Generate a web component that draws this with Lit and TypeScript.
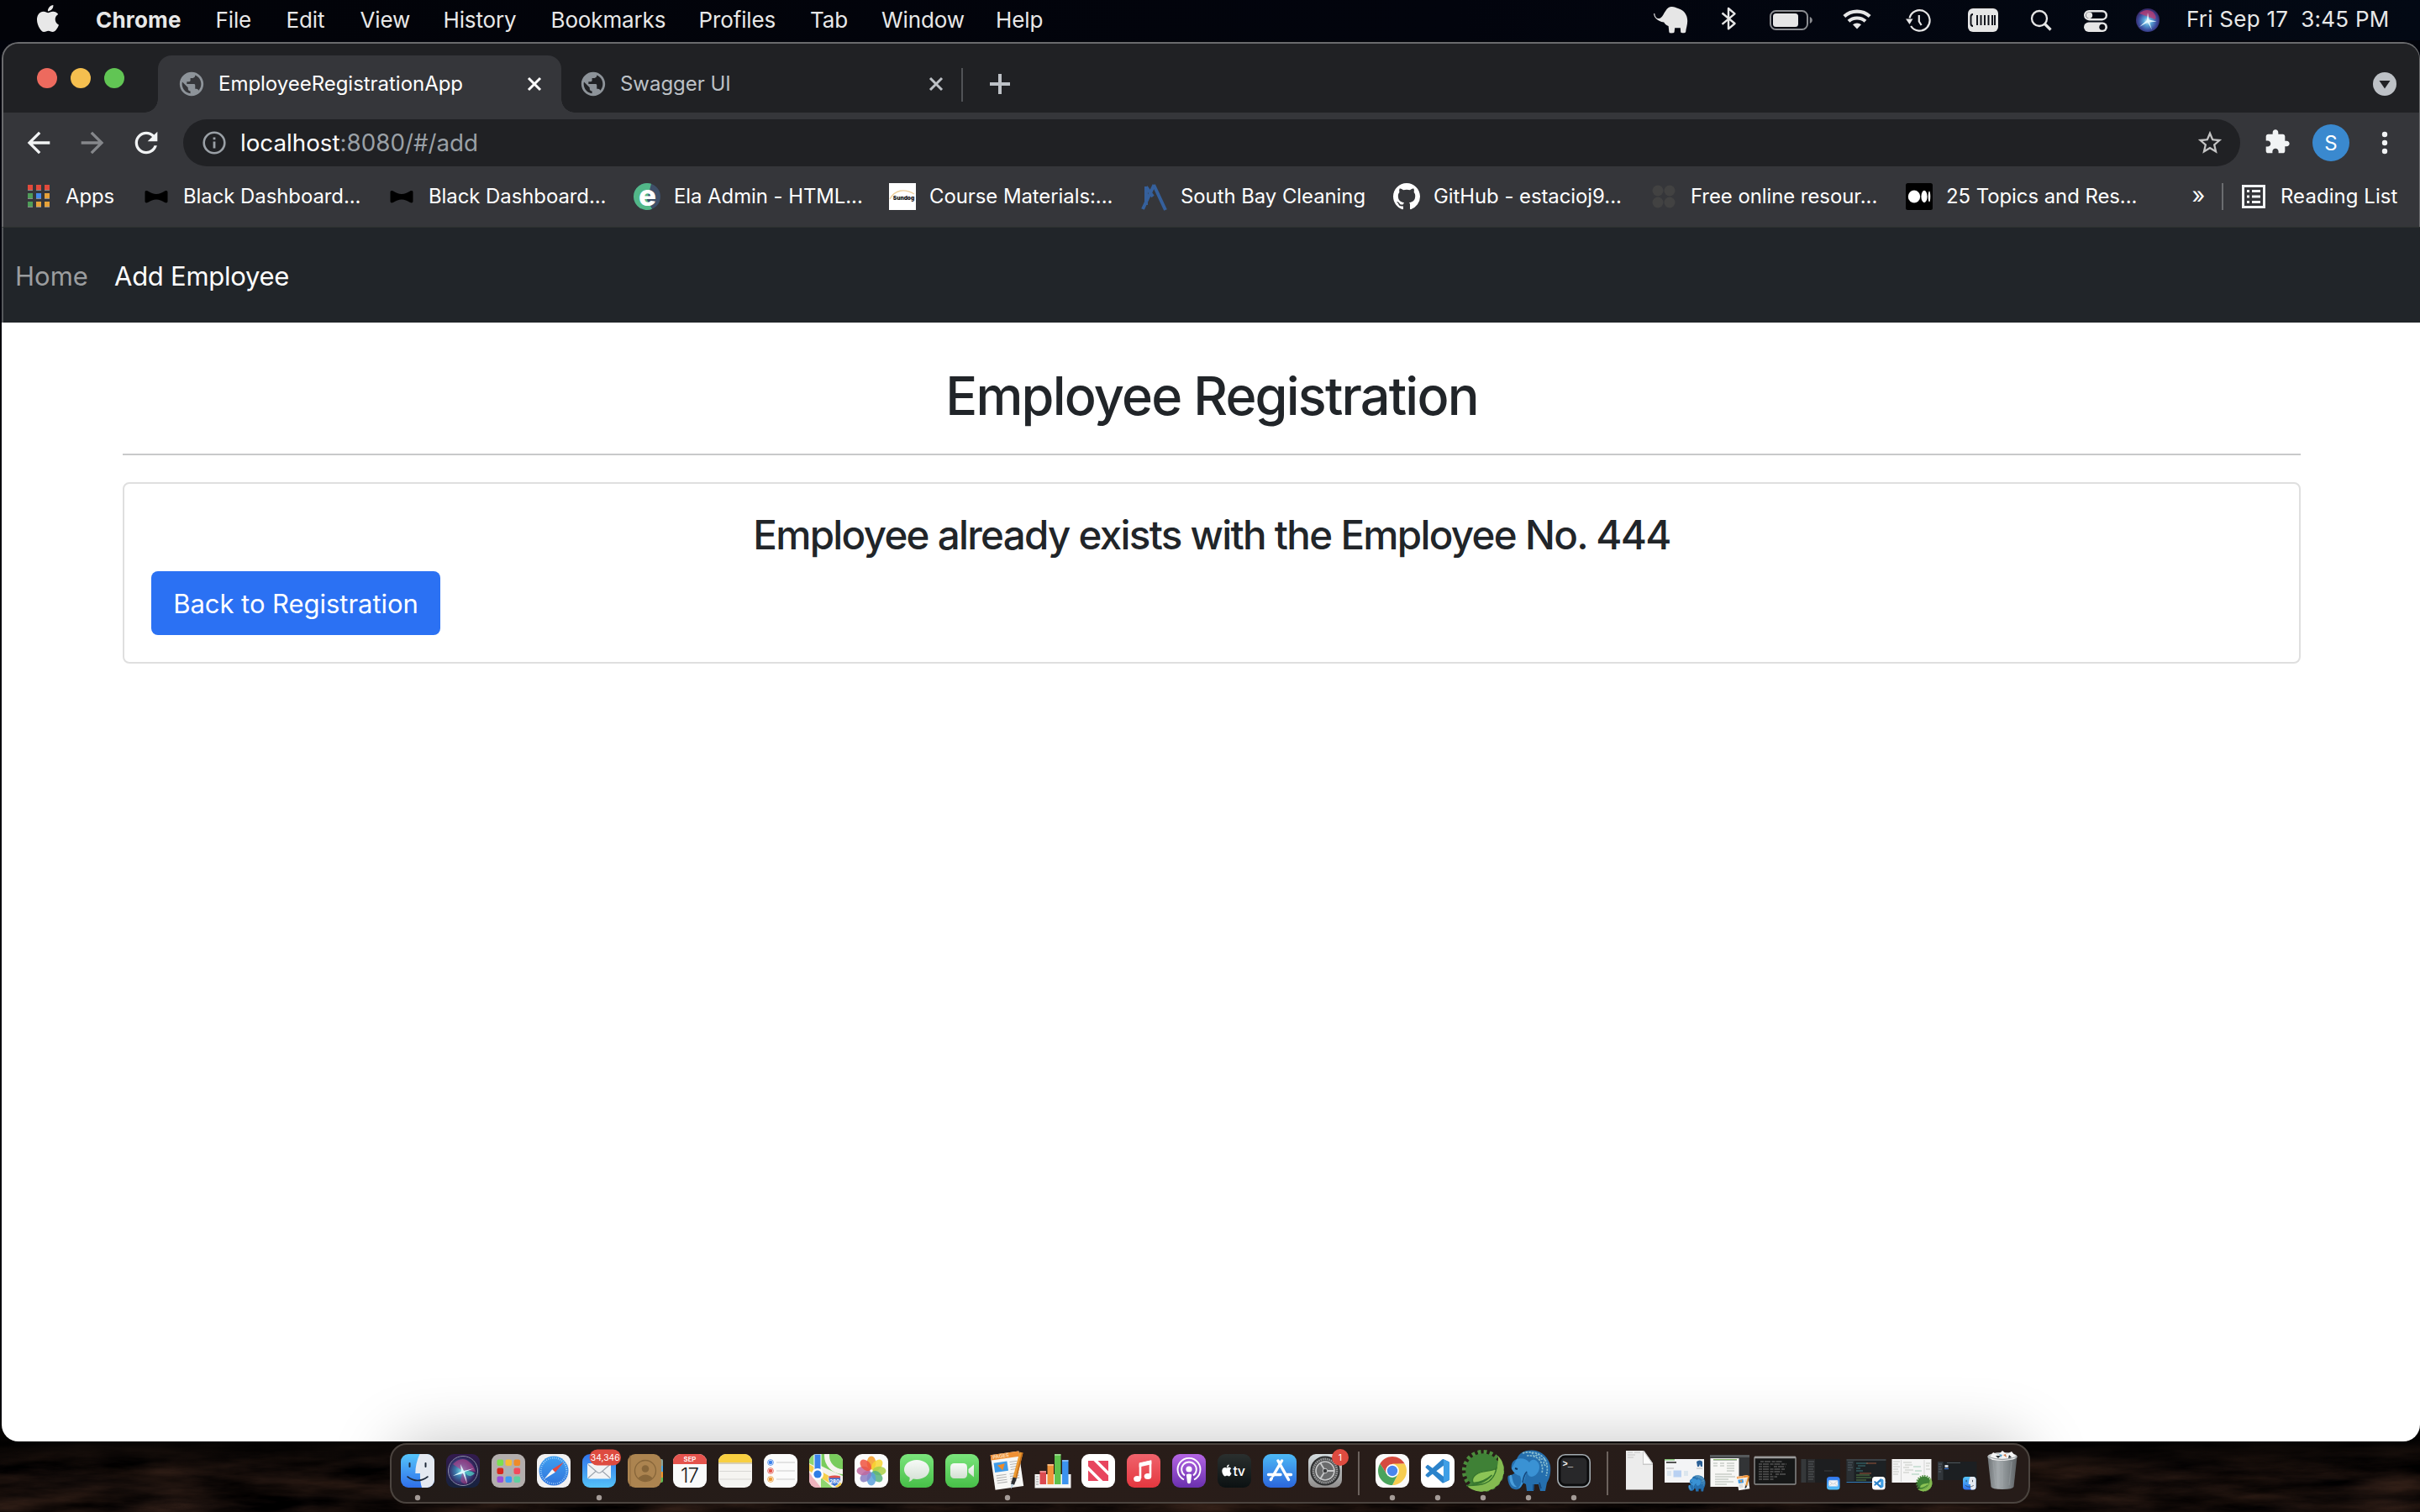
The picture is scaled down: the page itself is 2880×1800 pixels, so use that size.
import { LitElement, html, svg, css } from "lit";
import { customElement } from "lit/decorators.js";

const GLOBE = "M12 2C6.48 2 2 6.48 2 12s4.48 10 10 10 10-4.48 10-10S17.52 2 12 2zm-1 17.93c-3.95-.49-7-3.85-7-7.93 0-.62.08-1.21.21-1.79L9 15v1c0 1.1.9 2 2 2v1.93zm6.9-2.54c-.26-.81-1-1.39-1.9-1.39h-1v-3c0-.55-.45-1-1-1H8v-2h2c.55 0 1-.45 1-1V7h2c1.1 0 2-.9 2-2v-.41c2.93 1.19 5 4.06 5 7.41 0 2.08-.8 3.97-2.1 5.39z";
const PUZZLE = "M20.5 11H19V7c0-1.1-.9-2-2-2h-4V3.5C13 2.12 11.88 1 10.5 1S8 2.12 8 3.5V5H4c-1.1 0-1.99.9-1.99 2v3.8H3.5c1.49 0 2.7 1.21 2.7 2.7s-1.21 2.7-2.7 2.7H2V20c0 1.1.9 2 2 2h3.8v-1.5c0-1.49 1.21-2.7 2.7-2.7 1.49 0 2.7 1.21 2.7 2.7V22H17c1.1 0 2-.9 2-2v-4h1.5c1.38 0 2.5-1.12 2.5-2.5S21.88 11 20.5 11z";
const STAR = "M22 9.24l-7.19-.62L12 2 9.19 8.63 2 9.24l5.46 4.73L5.82 21 12 17.27 18.18 21l-1.63-7.03L22 9.24zM12 15.4l-3.76 2.27 1-4.28-3.32-2.88 4.38-.38L12 6.1l1.71 4.04 4.38.38-3.32 2.88 1 4.28L12 15.4z";
const RELOAD = "M17.65 6.35C16.2 4.9 14.21 4 12 4c-4.42 0-7.99 3.58-7.99 8s3.57 8 7.99 8c3.73 0 6.84-2.55 7.73-6h-2.08c-.82 2.33-3.04 4-5.65 4-3.31 0-6-2.69-6-6s2.69-6 6-6c1.66 0 3.14.69 4.22 1.78L13 11h7V4l-2.35 2.35z";
const BACK = "M20 11H7.83l5.59-5.59L12 4l-8 8 8 8 1.41-1.41L7.83 13H20v-2z";
const APPLE = "M12.152 6.896c-.948 0-2.415-1.078-3.96-1.04-2.04.027-3.91 1.183-4.961 3.014-2.117 3.675-.546 9.103 1.519 12.09 1.013 1.454 2.208 3.09 3.792 3.039 1.52-.065 2.09-.987 3.935-.987 1.831 0 2.35.987 3.96.948 1.637-.026 2.676-1.48 3.676-2.948 1.156-1.688 1.636-3.325 1.662-3.415-.039-.013-3.182-1.221-3.22-4.857-.026-3.04 2.48-4.494 2.597-4.559-1.429-2.09-3.623-2.324-4.39-2.376-2-.156-3.675 1.09-4.61 1.09zM15.53 3.83c.843-1.012 1.4-2.427 1.245-3.83-1.207.052-2.662.805-3.532 1.818-.78.896-1.454 2.338-1.273 3.714 1.338.104 2.715-.688 3.559-1.701";
const OCTOCAT = "M8 0C3.58 0 0 3.58 0 8c0 3.54 2.29 6.53 5.47 7.59.4.07.55-.17.55-.38 0-.19-.01-.82-.01-1.49-2.01.37-2.53-.49-2.69-.94-.09-.23-.48-.94-.82-1.13-.28-.15-.68-.52-.01-.53.63-.01 1.08.58 1.23.82.72 1.21 1.87.87 2.33.66.07-.52.28-.87.51-1.07-1.78-.2-3.64-.89-3.64-3.95 0-.87.31-1.59.82-2.15-.08-.2-.36-1.02.08-2.12 0 0 .67-.21 2.2.82.64-.18 1.32-.27 2-.27s1.36.09 2 .27c1.53-1.04 2.2-.82 2.2-.82.44 1.1.16 1.92.08 2.12.51.56.82 1.27.82 2.15 0 3.07-1.87 3.75-3.65 3.95.29.25.54.73.54 1.48 0 1.07-.01 1.93-.01 2.2 0 .21.15.46.55.38A8.01 8.01 0 0 0 16 8c0-4.42-3.58-8-8-8z";
const CODE = "M23.15 2.587L18.21.21a1.494 1.494 0 0 0-1.705.29l-9.46 8.63-4.12-3.128a.999.999 0 0 0-1.276.057L.327 7.261A1 1 0 0 0 .326 8.74L3.899 12 .326 15.26a1 1 0 0 0 .001 1.479L1.65 17.94a.999.999 0 0 0 1.276.057l4.12-3.128 9.46 8.63a1.492 1.492 0 0 0 1.704.29l4.942-2.377A1.5 1.5 0 0 0 24 20.06V3.939a1.5 1.5 0 0 0-.85-1.352zm-5.146 14.861L10.826 12l7.178-5.448v10.896z";

const range = (n: number) => Array.from({ length: n }, (_, i) => i);

/* ---------- menu bar ---------- */

const MENUS: [string, number][] = [
  ["File", 84], ["Edit", 88], ["View", 99], ["History", 128], ["Bookmarks", 176],
  ["Profiles", 132.5], ["Tab", 85], ["Window", 136], ["Help", 80],
];

@customElement("menu-bar")
class MenuBar extends LitElement {
  static styles = css`
    :host { display: flex; align-items: center; height: 48px; color: #e8e8e8; font-size: 26px; letter-spacing: -0.13px; line-height: 48px; background: linear-gradient(90deg, #020308, #02040d 60%, #030914); }
    .apple { width: 32px; height: 32px; margin: -4px 41px 0 41px; fill: #e8e8e8; }
    .app { width: 142.5px; font-weight: 700; letter-spacing: 0.2px; }
    .menu { flex: none; }
    .spacer { flex: 1; }
    .status { flex: none; width: 640px; height: 48px; }
    .clock { width: 280px; padding-left: 2px; box-sizing: border-box; margin-top: -2px; letter-spacing: 0.24px; }
  `;
  render() {
    return html`
      <svg class="apple" viewBox="0 0 24 24"><path d=${APPLE} /></svg>
      <span class="app">Chrome</span>
      ${MENUS.map(([label, w]) => html`<span class="menu" style="width:${w}px">${label}</span>`)}
      <span class="spacer"></span>
      <svg class="status" viewBox="1960 0 640 48" fill="#e6e6e6">
        <defs>
          <radialGradient id="orb" cx=".5" cy=".55" r=".55"><stop offset="0" stop-color="#eafcff"/><stop offset=".3" stop-color="#5aa6d8"/><stop offset=".7" stop-color="#3b4b9c"/><stop offset="1" stop-color="#35215c"/></radialGradient>
        </defs>
        <path transform="translate(-1.800 0)" d="M1971 16c.5 4.500 2.500 6.500 5.500 6c4-1 5-6 7.500-9c2-3.500 4-5 7.500-5c3 0 5 1.200 8 2.200c7 2.300 10.500 7.800 10.500 14.800c0 5-1.800 9-2 13c-.2 1.700-5.800 1.700-6 .2l-.4-5h-6.600l-.6 5c-.5 1.600-6 1.600-6.200 0l-.8-7.200c-2.500-1-4.200-2.500-5.400-4.500c-4-.5-8-2.300-10-5c-1.600-2-2.200-4-2-5.500z"/>
        <path d="M2049.500 15.500l15 12.500l-7.500 6.300V10l7.500 6.300l-15 12.500" fill="none" stroke="#e6e6e6" stroke-width="2.400" stroke-linejoin="round"/>
        <rect x="2107" y="13" width="44" height="22" rx="6.500" fill="none" stroke="#8b8d91" stroke-width="2"/>
        <rect x="2110" y="16" width="30" height="16" rx="3.500"/>
        <path d="M2153.800 20c4 1.500 4 6.500 0 8z" fill="#8b8d91"/>
        <g fill="none" stroke="#e6e6e6" stroke-width="4.200">
          <path d="M2194.800 19.500a22.500 22.500 0 0 1 30.400 0"/>
          <path d="M2200 25.300a15 15 0 0 1 20 0"/>
        </g>
        <path d="M2210 34.500l-5-5.200a7.600 7.600 0 0 1 10 0z"/>
        <path d="M2272.500 21.500a12.200 12.200 0 1 1 1.600 9.500" fill="none" stroke="#e6e6e6" stroke-width="2.200"/>
        <path d="M2268 22.500h8.500l-4 6.500z"/>
        <path d="M2283.800 18v7.500l2.800 4.500" fill="none" stroke="#e6e6e6" stroke-width="2.200"/>
        <rect x="2342" y="10" width="36" height="28" rx="6"/>
        <path d="M2348 17q-2.500 0-2.500 3v8q0 3 2.500 3M2353 18v12M2357.500 18v12M2362 18v12M2366.500 18v12M2371 18v12M2374 18v12" fill="none" stroke="#0a0c14" stroke-width="1.900"/>
        <circle cx="2427" cy="22" r="9" fill="none" stroke="#e6e6e6" stroke-width="2.300"/>
        <path d="M2433.500 28.500l7 7" stroke="#e6e6e6" stroke-width="3.200"/>
        <rect x="2481.200" y="13.200" width="25.600" height="10" rx="5" fill="none" stroke="#e6e6e6" stroke-width="2.400"/>
        <circle cx="2486.500" cy="18.200" r="3.700"/>
        <rect x="2480" y="26.500" width="28" height="11.500" rx="5.700"/>
        <circle cx="2501.800" cy="32.200" r="3.500" fill="#0a0c14"/>
        <circle cx="2556" cy="24" r="14" fill="url(#orb)"/>
        <path d="M2546 16q8-7 16-2q5 5 3 9q-9-3-19-7z" fill="#c2396f" opacity=".75"/>
        <path d="M2546 32l9-8l1-9l1.500 8.500l9 2l-8.500 1l3 9l-5-9z" fill="#eafcff" opacity=".9"/>
      </svg>
      <span class="clock">Fri Sep 17&nbsp; 3:45 PM</span>
    `;
  }
}

/* ---------- browser chrome ---------- */

const favicons = {
  bow: svg`<path d="M2.500 11c0-2 1.500-2.500 3.500-1.500c4 2 6 3.500 10 3.500s6-1.500 10-3.500c2-1 3.500-.5 3.500 1.500v10.500c0 2-1.500 2.500-3.500 1.500c-4-2-6-3.500-10-3.500s-6 1.500-10 3.500c-2 1-3.500 .5-3.500-1.500z" fill="#000"/>`,
  ela: svg`<circle cx="16" cy="16" r="16" fill="#3f5069"/><path d="M21 .8A16 16 0 1 0 22 30.800L16 20z" fill="#52b788"/><text x="16.500" y="26.500" text-anchor="middle" font-family="Inter, sans-serif" font-weight="800" font-size="35" fill="#fff">e</text>`,
  sundog: svg`<rect width="32" height="32" fill="#fff"/><path d="M1 19C7 8 18 6 30 13" fill="none" stroke="#edcf9b" stroke-width="1.400"/><text x="17.500" y="19.500" text-anchor="middle" font-family="Inter, sans-serif" font-weight="900" font-size="6.600" fill="#111">Sundog</text>`,
  south: svg`<path d="M7 4.500L15 16M7 26V4M16 2L30 32M16.500 2L3 31" fill="none" stroke="#35609c" stroke-width="4"/>`,
  github: svg`<path transform="scale(2)" d=${OCTOCAT} fill="#fff"/>`,
  clover: svg`${[[9, 9], [23, 9], [9, 23], [23, 23]].map(([x, y]) => svg`<circle cx=${x} cy=${y} r="6.500" fill="#424242"/>`)}`,
  medium: svg`<rect width="32" height="32" rx="2.500" fill="#000"/><ellipse cx="10" cy="16" rx="7.200" ry="7.600" fill="#fff"/><ellipse cx="22" cy="16" rx="3.600" ry="7.200" fill="#fff"/><ellipse cx="28" cy="16" rx="1.300" ry="6.500" fill="#fff"/>`,
};

const BOOKMARKS: [keyof typeof favicons, string, number][] = [
  ["bow", "Black Dashboard...", 292], ["bow", "Black Dashboard...", 292], ["ela", "Ela Admin - HTML...", 304],
  ["sundog", "Course Materials:...", 299], ["south", "South Bay Cleaning", 301], ["github", "GitHub - estacioj9...", 306],
  ["clover", "Free online resour...", 304], ["medium", "25 Topics and Res...", 340.5],
];

const GRID = ["#e24a3b", "#e24a3b", "#e24a3b", "#4f9d58", "#4489ec", "#e6a23a", "#4f9d58", "#e6a23a", "#e6a23a"];

@customElement("browser-chrome")
class BrowserChrome extends LitElement {
  static styles = css`
    :host { display: flex; flex-direction: column; box-sizing: border-box; height: 220px; border: 2px solid #6a6b6d; border-bottom: 0; border-right-width: 1px; border-radius: 20px 20px 0 0; background: #35363a; color: #fff; font-size: 24px; overflow: hidden; }
    svg { flex: none; display: block; overflow: visible; }
    .strip { display: flex; height: 82px; background: #202124; }
    .lights { display: flex; gap: 16px; padding: 29px 0 0 40px; width: 184px; box-sizing: border-box; }
    .light { width: 24px; height: 24px; border-radius: 50%; }
    .red { background: #ed6a5e; } .amber { background: #f5bf4f; } .green { background: #61c554; }
    .tab { display: flex; align-items: center; box-sizing: border-box; height: 68px; margin-top: 14px; color: #bdc1c6; }
    .title { flex: 1; margin-left: 18px; margin-top: -1px; letter-spacing: -0.03px; }
    .active { position: relative; width: 480px; padding: 0 23px 0 26px; background: #35363a; border-radius: 16px 16px 0 0; color: #fff; }
    .active::before, .active::after { content: ""; position: absolute; bottom: 0; width: 16px; height: 16px; }
    .active::before { left: -16px; background: radial-gradient(circle at 0 0, transparent 15.5px, #35363a 16px); }
    .active::after { right: -16px; background: radial-gradient(circle at 100% 0, transparent 15.5px, #35363a 16px); }
    .idle { width: 476px; padding: 0 21px 0 24px; }
    .globe { margin: 0 -3px; }
    .divider { width: 2px; height: 40px; margin-top: 29px; background: #515357; }
    .plus { margin: 36px 0 0 32px; }
    .spacer { flex: 1; }
    .caret { margin: 34px 27px 0 0; }
    .toolbar { display: flex; align-items: center; height: 72px; flex: none; }
    .nav { width: 40px; height: 40px; margin-right: 24px; fill: #f1f3f4; }
    .first { margin-left: 22px; }
    .dim { fill: #85878b; transform: scaleX(-1); }
    .omnibox { flex: none; display: flex; align-items: center; box-sizing: border-box; width: 2448px; height: 56px; padding: 0 19px 0 23px; border-radius: 28px; background: #202124; font-size: 27.75px; color: #9aa0a6; }
    .url { flex: 1; margin-left: 17px; }
    .host { color: #fff; }
    .ext { margin: -2px 26px 0 28px; }
    .avatar { flex: none; display: grid; place-items: center; width: 44px; height: 44px; border-radius: 50%; background: #3a89cf; font-size: 24px; }
    .dots { margin-left: 36px; }
    .marks { display: flex; align-items: center; height: 56px; flex: none; font-size: 23.9px; letter-spacing: -0.04px; }
    .appsicon { margin: 0 19px 0 29px; }
    .apps { width: 92px; margin-top: -1px; }
    .mark { display: flex; align-items: center; flex: none; gap: 16px; }
    .label { margin-top: -1px; }
    .more { width: 35.5px; font-size: 27px; margin-top: -4px; }
    .bar { width: 2px; height: 32px; background: #6b6d70; margin-right: 22px; }
    .readicon { margin-right: 18px; }
    .reading { white-space: nowrap; letter-spacing: 0.1px; margin-top: -1px; }
  `;
  render() {
    const globe = html`<svg class="globe" width="34" height="34" viewBox="0 0 24 24" fill="#8d9399"><path d=${GLOBE} /></svg>`;
    const close = (c: string) => html`<svg width="18" height="18" viewBox="0 0 18 18" stroke=${c} stroke-width="3"><path d="M2 2L16 16M16 2L2 16" /></svg>`;
    return html`
      <div class="strip">
        <div class="lights"><span class="light red"></span><span class="light amber"></span><span class="light green"></span></div>
        <div class="tab active">${globe}<span class="title">EmployeeRegistrationApp</span>${close("#fff")}</div>
        <div class="tab idle">${globe}<span class="title">Swagger UI</span>${close("#bdc1c6")}</div>
        <span class="divider"></span>
        <svg class="plus" width="24" height="24" viewBox="0 0 24 24" stroke="#bdc1c6" stroke-width="4"><path d="M12 0V24M0 12H24" /></svg>
        <span class="spacer"></span>
        <svg class="caret" width="28" height="28" viewBox="0 0 28 28"><circle cx="14" cy="14" r="14" fill="#bdc1c6" /><path d="M7.500 10H20.500L14 19.500z" fill="#202124" /></svg>
      </div>
      <div class="toolbar">
        <svg class="nav first" viewBox="0 0 24 24"><path d=${BACK} /></svg>
        <svg class="nav dim" viewBox="0 0 24 24"><path d=${BACK} /></svg>
        <svg class="nav" viewBox="0 0 24 24"><path d=${RELOAD} /></svg>
        <div class="omnibox">
          <svg width="28" height="28" viewBox="0 0 28 28"><circle cx="14" cy="14" r="12.300" fill="none" stroke="#9aa0a6" stroke-width="2.600" /><path d="M12.600 12.500h2.800v8h-2.800zM12.600 7.500h2.800v2.800h-2.800z" fill="#9aa0a6" /></svg>
          <span class="url"><span class="host">localhost</span>:8080/#/add</span>
          <svg width="34" height="34" viewBox="0 0 24 24" fill="#c4c4c4"><path d=${STAR} /></svg>
        </div>
        <svg class="ext" width="32" height="32" viewBox="0 0 24 24" fill="#f1f3f4"><path d=${PUZZLE} /></svg>
        <span class="avatar">S</span>
        <svg class="dots" width="12" height="28" viewBox="0 0 12 28" fill="#f1f3f4"><circle cx="6" cy="4" r="3.200" /><circle cx="6" cy="14" r="3.200" /><circle cx="6" cy="24" r="3.200" /></svg>
      </div>
      <div class="marks">
        <svg class="appsicon" width="26" height="28" viewBox="0 0 26 28">${GRID.map((c, i) => svg`<rect x=${(i % 3) * 10} y=${Math.floor(i / 3) * 10} width="6" height="7" fill="#8a8b8d"/><rect x=${(i % 3) * 10} y=${Math.floor(i / 3) * 10} width="6" height="6" fill=${c}/>`)}</svg>
        <span class="apps">Apps</span>
        ${BOOKMARKS.map(([icon, label, w]) => html`<span class="mark" style="width:${w}px"><svg width="32" height="32" viewBox="0 0 32 32">${favicons[icon]}</svg><span class="label">${label}</span></span>`)}
        <span class="more">»</span><span class="bar"></span>
        <svg class="readicon" width="28" height="28" viewBox="0 0 28 28"><rect x="1.500" y="1.500" width="25" height="25" fill="none" stroke="#f1f3f4" stroke-width="3" /><path d="M6 7.500h3M12 7.500h10M6 14h3M12 14h10M6 20.500h3M12 20.500h10" stroke="#f1f3f4" stroke-width="3" /></svg>
        <span class="reading">Reading List</span>
      </div>
    `;
  }
}

/* ---------- web page ---------- */

@customElement("employee-page")
class EmployeePage extends LitElement {
  static styles = css`
    :host { display: flex; flex-direction: column; position: relative; height: 1446px; background: #fff; border-radius: 0 0 20px 20px; overflow: hidden; color: #212529; }
    nav { display: flex; box-sizing: border-box; height: 114px; padding: 0 0 0 14px; border-left: 2px solid #55585b; border-top: 1px solid #2e312f; background: #212529; color: #fff; font-size: 31px; letter-spacing: -0.26px; line-height: 115px; }
    .home { width: 118px; color: #9b9d9f; letter-spacing: 0; }
    main { display: flex; flex-direction: column; margin: 0 142px 0 144px; }
    h1 { margin: 45px 0 0; height: 84px; font-size: 63px; letter-spacing: -1.83px; line-height: 84px; font-weight: 500; text-align: center; }
    hr { width: 100%; height: 2px; margin: 27px 0 32px; border: 0; background: #c8c9ca; }
    .card { box-sizing: border-box; height: 216px; padding: 32px; border: 2px solid #dfdfdf; border-radius: 8px; }
    h3 { margin: 0; height: 72px; font-size: 47.5px; letter-spacing: -1.7px; line-height: 58px; font-weight: 500; text-align: center; }
    button { display: block; width: 344px; height: 76px; padding: 0; border: 0; border-radius: 8px; background: #2b71f3; color: #fff; font: 400 31px/77px Inter, sans-serif; letter-spacing: -0.05px; }
    .shade { position: absolute; left: 474px; right: 474px; bottom: -80px; height: 72px; box-shadow: 0 0 76px 6px rgba(0, 0, 0, 0.25); border-radius: 24px; }
  `;
  render() {
    return html`
      <nav><span class="home">Home</span><span>Add Employee</span></nav>
      <main>
        <h1>Employee Registration</h1>
        <hr />
        <section class="card">
          <h3>Employee already exists with the Employee No. 444</h3>
          <button>Back to Registration</button>
        </section>
      </main>
      <div class="shade"></div>
    `;
  }
}

/* ---------- dock ---------- */

const tile = (fill: string, rest: unknown) => svg`<rect width="40" height="40" rx="9" fill=${fill}/>${rest}`;
const PETALS = ["#f59a23", "#f7d531", "#aacf45", "#56b27c", "#5aa0dc", "#8a7cc2", "#c0699f", "#ee5340"];
const LAUNCH = ["#7be04e", "#f6bc35", "#ee8b2b", "#d8281c", "#a7b2b8", "#f24a5c", "#9b4fd8", "#3b9bf5", "#5fd0a0"];

const finder = tile("url(#gFinder)", svg`<path d="M22.500 0C19 8 17.300 15 17.300 23H23c-.3 6 .5 12 2 17h6a9 9 0 0 0 9-9V9a9 9 0 0 0-9-9z" fill="#e4e9f1"/><path d="M10.500 11v4M29.500 11v4" stroke="#1f2a3a" stroke-width="2" stroke-linecap="round"/><path d="M8 27q12 9 24 0" fill="none" stroke="#1f2a3a" stroke-width="1.600" stroke-linecap="round"/>`);
const mail = tile("url(#gMail)", svg`<rect x="6" y="11" width="28" height="18.500" rx="2" fill="#f2f3f5"/><path d="M7 12.500l10.500 9q2.500 2 5 0l10.500-9M7 28.500l9-8M33 28.500l-9-8" fill="none" stroke="#9ba3ad" stroke-width="1.100"/>`);
const code = tile("#fff", svg`<path transform="translate(5.500 6) scale(1.190)" d=${CODE} fill="#2b83cb"/><path d="M27 6.500l7 3.200v20.600l-7 3.200z" fill="#3f9fe6"/>`);
const spring = svg`<circle cx="20" cy="20" r="22.600" fill="none" stroke="#4c8c3c" stroke-width="5" stroke-dasharray="3.800 3.300"/><circle cx="20" cy="20" r="20.800" fill="#3f8136"/><path d="M38 2.500c8 8 9.500 22 1 33C30 46 12 48 1.500 38.500C9 35 14 36 22 34c11-3 16-14 16-31.500z" fill="#84ba50"/><path d="M0 37.500c13 0 32 1 36-21C30 22 20 18 11.500 24.500C6 29 7.500 33 8.500 34.500c9-1 16-4 22-9.500c-6 7-16 12-30.500 12.500z" fill="#8cc456" stroke="#37762e" stroke-width="1.400"/>`;
const elephant = svg`<path d="M-2 26C-5 24-5 29-4 33c1.500 7 6 10 11 9c4-1 5-4 6-8l4 2l1 8h8l1-8h5l2 8h6l2-10c3-4 5-12 4-20C44 4 36-4 25-4.500C16-5 9-2 6 6C0 8-1 14 0 18l5 4z" fill="#256fae"/><path d="M6 6c6-2 12 0 15 4c3-5 8-4 11 1c3 6-1 15-8 16c-4 0-5-3-6-7c-2 8-4 20-11 21c5-4 5-10 3-15c-5-1-9-5-10-9z" fill="#3a92d4"/><path d="M0 25c-3-1-3 3-2 7c1 5 5 8 8 7c-4-3-5-8-6-14z" fill="#4a9fdc"/><path d="M13-1c10-3 22 0 27 8c3 6 3 13 1 19M18 2c8-1 15 3 17 8s2 9 1 12M24-2l3 5l5-3l2 6l5 0l-1 6l4 3" fill="none" stroke="#86bcd0" stroke-width="1.700" stroke-dasharray="2.500 1.200"/><path d="M4 17l3 1" stroke="#0d3358" stroke-width="2"/><path d="M13 34c1-6 2-10 5-13M26 36v7M33 34l2 7" fill="none" stroke="#16487c" stroke-width="1.600"/>`;
const pages = svg`<g transform="rotate(-8 20 20)"><path d="M2.500-1.500h34v42h-34z" fill="#f7f7f5"/><path d="M2.500-1.500h34v6.500h-34z" fill="#ef9035"/><text x="4.500" y="3.700" font-family="Inter, sans-serif" font-size="6" font-weight="700" fill="#fbd9b0">PAGES</text><rect x="5" y="8.500" width="16" height="11.500" fill="#3f9be8"/><path d="M9 12l9-1l-3.500 7.500z" fill="#f08a26"/><path d="M24 10h9M24 13h9M24 16h9M24 19h9M6 24h12M6 27h12M6 30h12M6 33h12M22 24h11M22 27h11M22 30h11M22 33h7" stroke="#b5b5b5" stroke-width="1.100"/></g><path d="M34.500-2.500l4 1.200L31 29l-4.500-1.200z" fill="#ec9a32"/><path d="M37-2l1.500.5L31 29l-1.500-.4z" fill="#c26d1b"/><path d="M26.500 27.500l4.500 1.200l-3 8l-4-1z" fill="#2d2f33"/><path d="M24.500 35.500l3 .8l-3.500 5.500z" fill="#b9cfdd"/>`;

type Item = "sep" | { art: unknown; dot?: boolean; badge?: string };
const mini = (art: unknown, x: number, y: number, k = 0.39) => svg`<g transform="translate(${x} ${y}) scale(${k})">${art}</g>`;

const ITEMS: Item[] = [
  { art: finder, dot: true },
  { art: tile("url(#gSiri)", svg`<circle cx="20" cy="20" r="17.500" fill="url(#gOrb)" stroke="#8a8fa8" stroke-width="1"/><path d="M8 12c6-7 14-8 19-3c4 3 6 6 8 12c-6-1-10-2-15-1c-5-3-8-5-12-8z" fill="#c03c88" opacity=".6"/><path d="M19 22c4 3 7 8 6 13c-3 1-6 0-8-3z" fill="#c03c88" opacity=".5"/><path d="M8 26l10-5.500L17 12l4 8l12-3l-11 4.500l3 14l-5-12.500z" fill="#dffcff" opacity=".95"/><path d="M22 21q7-2 12 2q-4 5-9 2z" fill="#54d5c8" opacity=".7"/>`) },
  { art: tile("#b3aead", range(9).map((i) => svg`<rect x=${6.5 + (i % 3) * 10} y=${6.5 + Math.floor(i / 3) * 10} width="7.600" height="7.600" rx="2" fill=${LAUNCH[i]}/>`)) },
  { art: tile("#f1f1f2", svg`<circle cx="20" cy="20" r="17.500" fill="url(#gSafari)"/><circle cx="20" cy="20" r="15.300" fill="none" stroke="#bfe3fb" stroke-width="2" stroke-dasharray=".7 1.700"/><path d="M32 9.500L21.800 21.800l-3.600-3.600z" fill="#e8483c"/><path d="M8.500 30L18.200 18.200l3.600 3.600z" fill="#f4f6f8"/>`) },
  { art: mail, dot: true, badge: "34,346" },
  { art: svg`<path d="M38 6h2.500q1.500 0 1.500 2v6h-4z" fill="#8aa39a"/><path d="M38 14h4v7h-4z" fill="#4aa8e8"/><path d="M38 21h4v7h-4z" fill="#ee9430"/><path d="M38 28h4v4q0 2-2 2h-2z" fill="#5ec152"/>${tile("#ac8450", svg`<path d="M3 1.500v37" stroke="#8f6b3d" stroke-width="1"/><circle cx="21" cy="20" r="12.500" fill="none" stroke="#87663a" stroke-width="1.300"/><circle cx="21" cy="17.500" r="4.300" fill="#87663a"/><path d="M12.500 28.500q8.500-8 17 0q-8.500 7.500-17 0z" fill="#87663a"/>`)}` },
  { art: tile("#fafafa", svg`<path d="M0 12V9a9 9 0 0 1 9-9h22a9 9 0 0 1 9 9v3z" fill="#e5534d"/><text x="20" y="9.300" text-anchor="middle" font-family="Inter, sans-serif" font-size="7.800" font-weight="600" fill="#fff">SEP</text><text x="19.500" y="33.800" text-anchor="middle" font-family="Inter, sans-serif" font-size="24" font-weight="300" letter-spacing="-1" fill="#222">17</text>`) },
  { art: tile("#f5f4f1", svg`<path d="M0 10V9a9 9 0 0 1 9-9h22a9 9 0 0 1 9 9v1z" fill="#f8cf40"/><path d="M0 11h40" stroke="#b9a978" stroke-width="1"/><path d="M1 20.500h38M1 30h38" stroke="#d9d8d5" stroke-width="1"/>`) },
  { art: tile("#fbfbfb", svg`${["#3c82ec", "#e4544a", "#ec9a34"].map((c, i) => svg`<circle cx="8" cy=${10 + i * 10} r="3.400" fill="none" stroke=${c} stroke-width=".8"/><circle cx="8" cy=${10 + i * 10} r="2.300" fill=${c}/><path d="M15 ${10 + i * 10}h22" stroke="#cfcfcf" stroke-width="1.100"/>`)}`) },
  { art: svg`<clipPath id="cMap"><rect width="40" height="40" rx="9"/></clipPath><g clip-path="url(#cMap)"><rect width="40" height="40" fill="#f4f1ea"/><path d="M14 0h26v26L22 18l-8-4z" fill="#79cc5c"/><circle cx="40" cy="2" r="19" fill="none" stroke="#f6f4ee" stroke-width="6"/><path d="M0 12l40 24v8L0 20z" fill="#f6cf4a"/><path d="M0 0h6v14L0 11z" fill="#8ed56f"/><path d="M0 22l14 18H0z" fill="#eeb3bd"/><path d="M14 28l14 12H14z" fill="#8ed56f"/><rect x="6" width="8" height="22" fill="#3b84ea" stroke="#fff" stroke-width="1"/><circle cx="10" cy="24" r="7" fill="#fff"/><circle cx="10" cy="24" r="4.600" fill="#2f7fe6"/><path d="M23 27q7-2.500 14.500 0q1 8-7.200 11.500Q22 35 23 27z" fill="#3a73d6" stroke="#fff" stroke-width=".7"/><path d="M23.500 26.600q7-2 13.500 0v2h-13.500z" fill="#e0514a"/><text x="30.200" y="34.500" text-anchor="middle" font-family="Inter, sans-serif" font-size="6" font-weight="700" fill="#fff">280</text></g>` },
  { art: tile("#fcfcfc", range(8).map((i) => svg`<ellipse cx="20" cy="10.500" rx="5.300" ry="8" fill=${PETALS[i]} opacity=".85" transform="rotate(${i * 45} 20 20)"/>`)) },
  { art: tile("url(#gGreen)", svg`<path d="M20 7c8.500 0 15 5 15 11.500S28.500 30 20 30c-1.500 0-3-.2-4.300-.5C14 31.500 12 32.700 10.500 33c1-1.500 1.400-3.500 1-5.200C7.500 25.700 5 22.300 5 18.500C5 12 11.500 7 20 7z" fill="url(#gPearl)"/>`) },
  { art: tile("url(#gGreen)", svg`<rect x="6" y="11" width="20" height="18" rx="4.500" fill="url(#gPearl)"/><path d="M27.500 18l6.500-5.500v15l-6.500-5.500z" fill="url(#gPearl)"/>`) },
  { art: pages, dot: true },
  { art: svg`<path d="M-1.500 24h43v16.500h-43z" fill="#f4f4f4"/><path d="M0 27h3M0 30h3M0 33h3M0 36h3" stroke="#999" stroke-width="1"/><rect x="4.500" y="20" width="7.500" height="16" fill="#dc4a50"/><rect x="13.500" y="12" width="7.500" height="24" fill="#f0943a"/><rect x="22" y="0" width="7.500" height="36" fill="#5fc14c"/><rect x="31" y="7" width="7.500" height="29" fill="#3c93ee"/><path d="M4.500 20h7.500v2h-7.500zM13.500 12h7.500v2h-7.500zM22 0h7.500v2h-7.500zM31 7h7.500v2h-7.500z" fill="#fff" opacity=".35"/>` },
  { art: tile("#fff", svg`<path d="M8 8h6.500L32 25.500V32h-6.500L8 14.500zM19.500 8H32v12.500zM8 19.500L20.500 32H8z" fill="#e8455e"/>`) },
  { art: tile("url(#gMusic)", svg`<path d="M16 29V12l12-3v16.500" fill="none" stroke="#fff" stroke-width="2.600" stroke-linejoin="round"/><path d="M14.700 10.500l14.600-3.200v5l-14.600 3.200z" fill="#fff"/><ellipse cx="12.500" cy="29.500" rx="4.300" ry="3.500" fill="#fff"/><ellipse cx="25" cy="26.500" rx="4.300" ry="3.500" fill="#fff"/>`) },
  { art: tile("url(#gPod)", svg`<g fill="none" stroke="#fff" stroke-width="1.900"><path d="M14 30.500a13.500 13.500 0 1 1 12 0"/><path d="M15 25.500a8.800 8.800 0 1 1 10 0"/></g><circle cx="20" cy="18" r="3.600" fill="#fff"/><path d="M16.800 24.500q3.200-2 6.400 0L22 34q-2 2.500-4 0z" fill="#fff"/>`) },
  { art: tile("url(#gTv)", svg`<path transform="translate(4 12.500) scale(.580)" d=${APPLE} fill="#fff"/><text x="18.500" y="25.500" font-family="Inter, sans-serif" font-size="16" font-weight="500" letter-spacing="-.4" fill="#fff">tv</text>`) },
  { art: tile("url(#gStore)", svg`<path d="M22.500 8L12 26M18 8l12.500 22.500M6.500 24.500h14.500M27 24.500h6.500M10.300 29l-1 1.500" fill="none" stroke="#fff" stroke-width="3.400" stroke-linecap="round"/>`) },
  { art: tile("url(#gPrefs)", svg`<circle cx="20" cy="20" r="16.800" fill="#4a4b4c" stroke="#2b2c2d" stroke-width="1.600"/><circle cx="20" cy="20" r="14" fill="none" stroke="#9a9b9c" stroke-width="2.500" stroke-dasharray="1.500 1"/><circle cx="20" cy="20" r="11" fill="#6a6b6c" stroke="#c7c8c9" stroke-width="1.600"/><path d="M20 20h11M20 20l-6-10M20 20l-6 10" stroke="#c7c8c9" stroke-width="1.800"/><circle cx="20" cy="20" r="2.800" fill="#3b3c3d" stroke="#c7c8c9" stroke-width="1"/>`), badge: "1" },
  "sep",
  { art: tile("#fafafa", svg`<path d="M5.300 11.500A17 17 0 0 1 34.700 11.500L20 12.300L13.300 23.850z" fill="#d64a3e"/><path d="M34.700 11.500A17 17 0 0 1 20 37L26.700 23.850L20 11.500z" fill="#f7cd50"/><path d="M20 37A17 17 0 0 1 5.300 11.500L13.300 23.850L26.700 23.850z" fill="#4aa45c"/><circle cx="20" cy="20" r="7.900" fill="#fff"/><circle cx="20" cy="20" r="6.200" fill="#4a86ee"/>`), dot: true },
  { art: code, dot: true },
  { art: spring, dot: true },
  { art: elephant, dot: true },
  { art: svg`<rect x=".8" y=".8" width="38.400" height="38.400" rx="9" fill="#0b0b0c" stroke="#a3abb0" stroke-width="1.600"/><rect x="4.500" y="4.500" width="31" height="31" rx="5" fill="#28282a"/><text x="6.500" y="14.500" font-family="Liberation Mono, monospace" font-size="10.500" font-weight="700" fill="#f4f4f4">&gt;_</text>`, dot: true },
  "sep",
  { art: svg`<path d="M4-4h21L36 11v31.500H4z" fill="#ececec"/><path d="M24-4l2 .5L36 11v2H24z" fill="#c9c9c9"/><path d="M25-3L35 11.500H25z" fill="#fbfbfb"/><path d="M6-2h6M6 1h9M6 4h7M14-2h7" stroke="#bdbdbd" stroke-width=".8"/>` },
  { art: svg`<rect x="-4" y="6" width="47" height="28" fill="#f3f4f6"/><rect x="-4" y="6" width="12" height="1.600" fill="#86c27a"/><rect x="-2" y="9" width="12" height="2" fill="#555"/><path d="M34 9q4-3 7 0v6h-2l-1-3l-1 3h-2z" fill="#2b5f96"/><rect x="6.500" y="19.500" width="9.500" height="8" fill="#b9d1f2"/><rect x="-1" y="20" width="5" height="6" fill="#dce6ee"/><rect x="19" y="20" width="5" height="6" fill="#dce6ee"/><path d="M-2 17h9M34 17h7" stroke="#aaa" stroke-width=".8"/>${mini(elephant, 26, 27, 0.4)}` },
  { art: svg`<rect x="-4" y="1" width="47" height="38" fill="#323436"/><rect x="-4" y="1" width="47" height="3" fill="#565a5c"/><rect x="-3.500" y="5" width="34" height="34" fill="#f7f7f5"/><path d="M0 7.500h28M0 11h5M8 11h5M0 14h5M8 14h5M16 11h9M16 14h9M16 17h9M16 20h9M2 24h20M2 27h24M2 30h16M2 33h22M2 36h14" stroke="#a9b2ac" stroke-width=".9"/><path d="M0 6.500h28" stroke="#8dbb70" stroke-width="1"/>${mini(pages, 28, 26.5)}` },
  { art: svg`<rect x="-5" y="3.500" width="49" height="32.500" rx="1" fill="#161717" stroke="#8d8d8d" stroke-width="1.400"/><path d="M-5 4h49" stroke="#9a9a9a" stroke-width="2.400"/><path d="M2 9h26M0 12h33M0 15h14M18 15h14M0 18h32M0 21h28M0 24h16M20 24h13M0 27h22M0 30h18" stroke="#8b8b8b" stroke-width=".8" stroke-dasharray="4 1 7 1.500"/>` },
  { art: svg`<rect x="-3.500" y="6" width="46.500" height="28" fill="#1d1e20"/><rect x="-3.500" y="6" width="6" height="28" fill="#35383a"/><rect x="4" y="6" width="9" height="28" fill="#2a2b2d"/><path d="M5 9h7M5 12h6M5 15h7M5 18h6M5 21h7M5 24h6M5 27h7M5 30h6" stroke="#63676a" stroke-width=".8"/><path d="M24 20h10" stroke="#45484a" stroke-width=".8"/>${mini(mail, 27, 27)}` },
  { art: svg`<rect x="-3.500" y="6" width="47" height="28" fill="#1d2124"/><rect x="-3.500" y="6" width="47" height="2" fill="#3b4145"/><path d="M-3.500 33.500h47" stroke="#2f7fc0" stroke-width="1.200"/><rect x="-3.500" y="8" width="9" height="24" fill="#2b3034"/><path d="M8 11h14M10 14h9M8 17h5M8 20h8" stroke="#3f7f86" stroke-width=".9"/><path d="M20 11h12M12 23h14" stroke="#a8593d" stroke-width=".9"/><path d="M8 25h16M8 28h18M8 31h12" stroke="#5f8f4e" stroke-width=".9"/><path d="M-2 10h6M-2 13h5M-2 16h6M-2 19h4" stroke="#5b6a72" stroke-width=".8"/>${mini(code, 27, 27)}` },
  { art: svg`<rect x="-3.500" y="6" width="47" height="28" fill="#f5f5f5"/><path d="M7.500 7v26M35 7v26" stroke="#d5d5d5" stroke-width="1"/><path d="M-2 9h8M-2 12h6M-2 15h8M-2 18h6M-2 21h7M-2 24h6M10 10h10M12 13h9M10 16h7M12 19h10M10 22h7M37 11h5M37 14h4M37 18h5" stroke="#b9bdb6" stroke-width=".8"/><path d="M22 15h9M24 20h8M20 24h9" stroke="#8fc3a8" stroke-width=".8"/>${mini(spring, 27, 27)}` },
  { art: svg`<rect x="-3" y="9" width="46.500" height="22" fill="#1c1f22"/><rect x="-3" y="9" width="6.500" height="22" fill="#31363b"/><path d="M-2 12h4M-2 15h3M-2 18h4M-2 21h3" stroke="#6c757c" stroke-width=".8"/><path d="M8 10.500h16" stroke="#565b60" stroke-width=".9"/><rect x="5.500" y="13" width="4" height="3" fill="#cfd6dd"/><path d="M5 17.500h5" stroke="#3c78d8" stroke-width="1.200"/>${mini(finder, 27, 27)}` },
  { art: svg`<path d="M2.500 3h35L33.500 39q-1 3-13.500 3T6.500 39z" fill="url(#gTrash)"/><ellipse cx="20" cy="3" rx="17.500" ry="5" fill="#c6c9ca"/><path d="M5 4l4-6l6 3l5-5l5 4l6-3l5 6l-2 3l-14 2l-12-1z" fill="#f4f4f4"/><path d="M12 2l3 3l3-3zM28 1l3 3l-4 1z" fill="#2d3436"/><path d="M16 0l4 1l-2 3z" fill="#5aa0c8"/><path d="M21 1l3-1l1 4z" fill="#d07a4a"/><path d="M2.500 3q17.500 7 35 0" fill="none" stroke="#9ea4a7" stroke-width="1.300"/><path d="M9 9l3 28M31 9l-3 28M20 9v30" stroke="#a9afb2" stroke-width="1.200" opacity=".35"/>` },
];

const grad = (id: string, a: string, b: string) => svg`<linearGradient id=${id} x1="0" y1="0" x2="0" y2="1"><stop offset="0" stop-color=${a}/><stop offset="1" stop-color=${b}/></linearGradient>`;

@customElement("mac-dock")
class MacDock extends LitElement {
  static styles = css`
    :host { display: flex; box-sizing: border-box; width: 1952px; height: 72px; padding: 0 4px; border: 2px solid #4b443f; border-radius: 20px; background: linear-gradient(90deg, #221b18, #291d19 40%, #261c19); }
    svg { flex: none; display: block; overflow: visible; }
    .defs { width: 0; height: 68px; }
    .sep { flex: none; width: 26px; height: 68px; }
    .sep::after { content: ""; display: block; width: 2px; height: 52px; margin: 8px 0 0 12px; background: #6c625d; }
    .sep.late { width: 24px; }
  `;
  render() {
    return html`
      <svg class="defs">
        <defs>
          ${grad("gFinder", "#55c5fb", "#2f6fea")}${grad("gMail", "#3074ec", "#55c2f8")}${grad("gSafari", "#3f9ff0", "#2f74dc")}
          ${grad("gGreen", "#7be57c", "#47bf48")}${grad("gMusic", "#f0636c", "#e4373f")}${grad("gPod", "#b465e4", "#6a30ae")}
          ${grad("gTv", "#2a2f2e", "#0b1112")}${grad("gStore", "#4cb9f6", "#2b66dc")}${grad("gPrefs", "#d5dde0", "#8f8c8b")}
          ${grad("gSiri", "#331a4e", "#16233f")}${grad("gPearl", "#f6faf6", "#d3dfd3")}
          <radialGradient id="gOrb" cx=".45" cy=".5" r=".6"><stop offset="0" stop-color="#79dfe8" /><stop offset=".35" stop-color="#3b79ab" /><stop offset=".75" stop-color="#33265f" /><stop offset="1" stop-color="#1d1838" /></radialGradient>
          <linearGradient id="gTrash"><stop offset="0" stop-color="#6f7477" /><stop offset=".35" stop-color="#a4aaad" /><stop offset=".7" stop-color="#82888b" /><stop offset="1" stop-color="#5c6063" /></linearGradient>
        </defs>
      </svg>
      ${ITEMS.map((it, i) => it === "sep"
        ? html`<span class="sep ${i > 23 ? "late" : ""}"></span>`
        : html`<svg width="54" height="68" viewBox="0 0 54 68">
            <g transform="translate(7 11)">${it.art}</g>
            ${it.dot ? svg`<circle cx="27" cy="63" r="3.200" fill="#a49b97"/>` : ""}
            ${it.badge === "1" ? svg`<circle cx="45" cy="15" r="10" fill="#de4b40"/><text x="44.800" y="18.700" text-anchor="middle" font-family="Inter, sans-serif" font-size="10.500" fill="#fff">1</text>` : ""}
            ${it.badge && it.badge !== "1" ? svg`<rect x="15.500" y="5.500" width="37.500" height="19" rx="9.500" fill="#de4b40"/><text x="34.200" y="18.800" text-anchor="middle" font-family="Inter, sans-serif" font-size="10.300" fill="#fff">${it.badge}</text>` : ""}
          </svg>`)}
    `;
  }
}

/* ---------- desktop ---------- */

@customElement("app-root")
class AppRoot extends LitElement {
  static styles = css`
    :host { display: flex; flex-direction: column; position: relative; width: 2880px; height: 1800px; background: #02040b; font-family: Inter, "Liberation Sans", sans-serif; overflow: hidden; }
    .wood { position: absolute; left: 0; bottom: 0; width: 2880px; height: 110px; }
    .window { position: relative; flex: none; display: flex; flex-direction: column; margin: 2px 0 0 2px; }
    .dock { position: relative; display: flex; margin: 2px 0 0 464px; }
  `;
  render() {
    return html`
      <svg class="wood" viewBox="0 0 2880 110">
        <defs>
          <filter id="grain" x="0" y="0" width="100%" height="100%" color-interpolation-filters="sRGB">
            <feTurbulence type="fractalNoise" baseFrequency="0.008 0.045" numOctaves="6" seed="11" />
            <feColorMatrix values="0.28 0.1 0 0 -0.108  0.18 0.07 0 0 -0.076  0.13 0.06 0 0 -0.058  0 0 0 0 1" />
          </filter>
          <linearGradient id="fade" x1="0" y1="0" x2="0" y2="1"><stop offset="0.24" stop-color="#000" stop-opacity=".8" /><stop offset=".55" stop-color="#000" stop-opacity="0" /></linearGradient>
        </defs>
        <rect width="2880" height="110" fill="#120c09" />
        <rect width="2880" height="110" filter="url(#grain)" />
        <rect width="2880" height="110" fill="url(#fade)" />
      </svg>
      <menu-bar></menu-bar>
      <div class="window"><browser-chrome></browser-chrome><employee-page></employee-page></div>
      <div class="dock"><mac-dock></mac-dock></div>
    `;
  }
}
